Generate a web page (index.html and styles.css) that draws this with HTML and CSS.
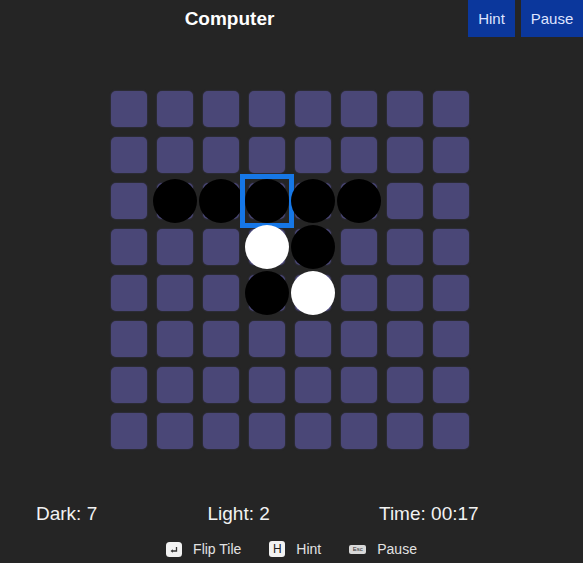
FILE: index.html
```html
<!DOCTYPE html>
<html>
<head>
<meta charset="utf-8">
<link rel="stylesheet" href="styles.css">
</head>
<body>
<div class="app">
  <header class="top">
    <div class="title">Computer</div>
    <button class="btn btn-hint">Hint</button>
    <button class="btn btn-pause">Pause</button>
  </header>

  <div class="board">
    <div class="tile"></div><div class="tile"></div><div class="tile"></div><div class="tile"></div><div class="tile"></div><div class="tile"></div><div class="tile"></div><div class="tile"></div>
    <div class="tile"></div><div class="tile"></div><div class="tile"></div><div class="tile"></div><div class="tile"></div><div class="tile"></div><div class="tile"></div><div class="tile"></div>
    <div class="tile"></div><div class="tile"><span class="disc dark"></span></div><div class="tile"><span class="disc dark"></span></div><div class="tile"><span class="disc dark"></span><span class="cursor"></span></div><div class="tile"><span class="disc dark"></span></div><div class="tile"><span class="disc dark"></span></div><div class="tile"></div><div class="tile"></div>
    <div class="tile"></div><div class="tile"></div><div class="tile"></div><div class="tile"><span class="disc light"></span></div><div class="tile"><span class="disc dark"></span></div><div class="tile"></div><div class="tile"></div><div class="tile"></div>
    <div class="tile"></div><div class="tile"></div><div class="tile"></div><div class="tile"><span class="disc dark"></span></div><div class="tile"><span class="disc light"></span></div><div class="tile"></div><div class="tile"></div><div class="tile"></div>
    <div class="tile"></div><div class="tile"></div><div class="tile"></div><div class="tile"></div><div class="tile"></div><div class="tile"></div><div class="tile"></div><div class="tile"></div>
    <div class="tile"></div><div class="tile"></div><div class="tile"></div><div class="tile"></div><div class="tile"></div><div class="tile"></div><div class="tile"></div><div class="tile"></div>
    <div class="tile"></div><div class="tile"></div><div class="tile"></div><div class="tile"></div><div class="tile"></div><div class="tile"></div><div class="tile"></div><div class="tile"></div>
  </div>

  <div class="stats">
    <div class="stat">Dark: 7</div>
    <div class="stat">Light: 2</div>
    <div class="stat">Time: 00:17</div>
  </div>

  <div class="keys">
    <div class="key">
      <span class="kicon kenter"><svg width="16" height="15" viewBox="0 0 16 15"><rect x="0" y="0" width="16" height="15" rx="3.5" fill="#f2f2f2"/><path d="M10.5 5 V9 H6" fill="none" stroke="#333" stroke-width="1.3"/><path d="M4.5 9 L6.8 7.2 L6.8 10.8 Z" fill="#333"/></svg></span>
      <span>Flip Tile</span>
    </div>
    <div class="key">
      <span class="kicon kh">H</span>
      <span>Hint</span>
    </div>
    <div class="key">
      <span class="kicon kesc">Esc</span>
      <span>Pause</span>
    </div>
  </div>
</div>
</body>
</html>
```

FILE: styles.css
```css
html, body {
  margin: 0;
  padding: 0;
  background: #252525;
}
body {
  width: 583px;
  height: 563px;
  overflow: hidden;
  font-family: "Liberation Sans", Arial, sans-serif;
  color: #f0f0f0;
}
.app {
  display: flex;
  flex-direction: column;
}
.top {
  display: flex;
  height: 37px;
  gap: 6px;
}
.title {
  flex: 1;
  text-align: center;
  padding-right: 3px;
  font-size: 19px;
  font-weight: bold;
  line-height: 37px;
  color: #ffffff;
}
.btn {
  border: 0;
  margin: 0;
  padding: 0;
  height: 37px;
  background: #0b379c;
  color: #dfe4ff;
  font-family: "Liberation Sans", Arial, sans-serif;
  font-size: 15px;
  line-height: 37px;
  text-align: center;
}
.btn-hint { width: 47px; }
.btn-pause { width: 62px; }

.board {
  display: grid;
  grid-template-columns: repeat(8, 36px);
  grid-auto-rows: 36px;
  gap: 10px;
  width: 358px;
  margin: 54px 0 0 111px;
}
.tile {
  position: relative;
  background: #4a4777;
  border-radius: 5px;
  box-shadow: 0 0 2px 0 rgba(74, 71, 119, 0.7);
}
.disc {
  position: absolute;
  left: -4px;
  top: -4px;
  width: 44px;
  height: 44px;
  border-radius: 50%;
}
.disc.dark { background: #000; }
.disc.light { background: #fff; }
.cursor {
  position: absolute;
  left: -9px;
  top: -9px;
  width: 44px;
  height: 44px;
  border: 5px solid #1677e6;
}

.stats {
  display: flex;
  margin-top: 54px;
  padding-left: 36px;
  font-size: 19px;
  line-height: 22px;
  color: #f2f2f2;
}
.stat { width: 171.5px; }

.keys {
  display: flex;
  justify-content: center;
  gap: 28px;
  margin-top: 16px;
  font-size: 14px;
  line-height: 16px;
  color: #e2e2e2;
}
.key {
  display: flex;
  align-items: center;
  gap: 11px;
}
.kicon {
  display: flex;
  align-items: center;
  justify-content: center;
}
.kenter svg { display: block; }
.kh {
  width: 16px;
  height: 16px;
  border-radius: 3px;
  background: #f2f2f2;
  color: #222;
  font-size: 12px;
  line-height: 16px;
}
.kesc {
  width: 17px;
  height: 9px;
  border-radius: 2px;
  background: #d8d8d8;
  color: #333;
  font-size: 6px;
  line-height: 9px;
}
```
